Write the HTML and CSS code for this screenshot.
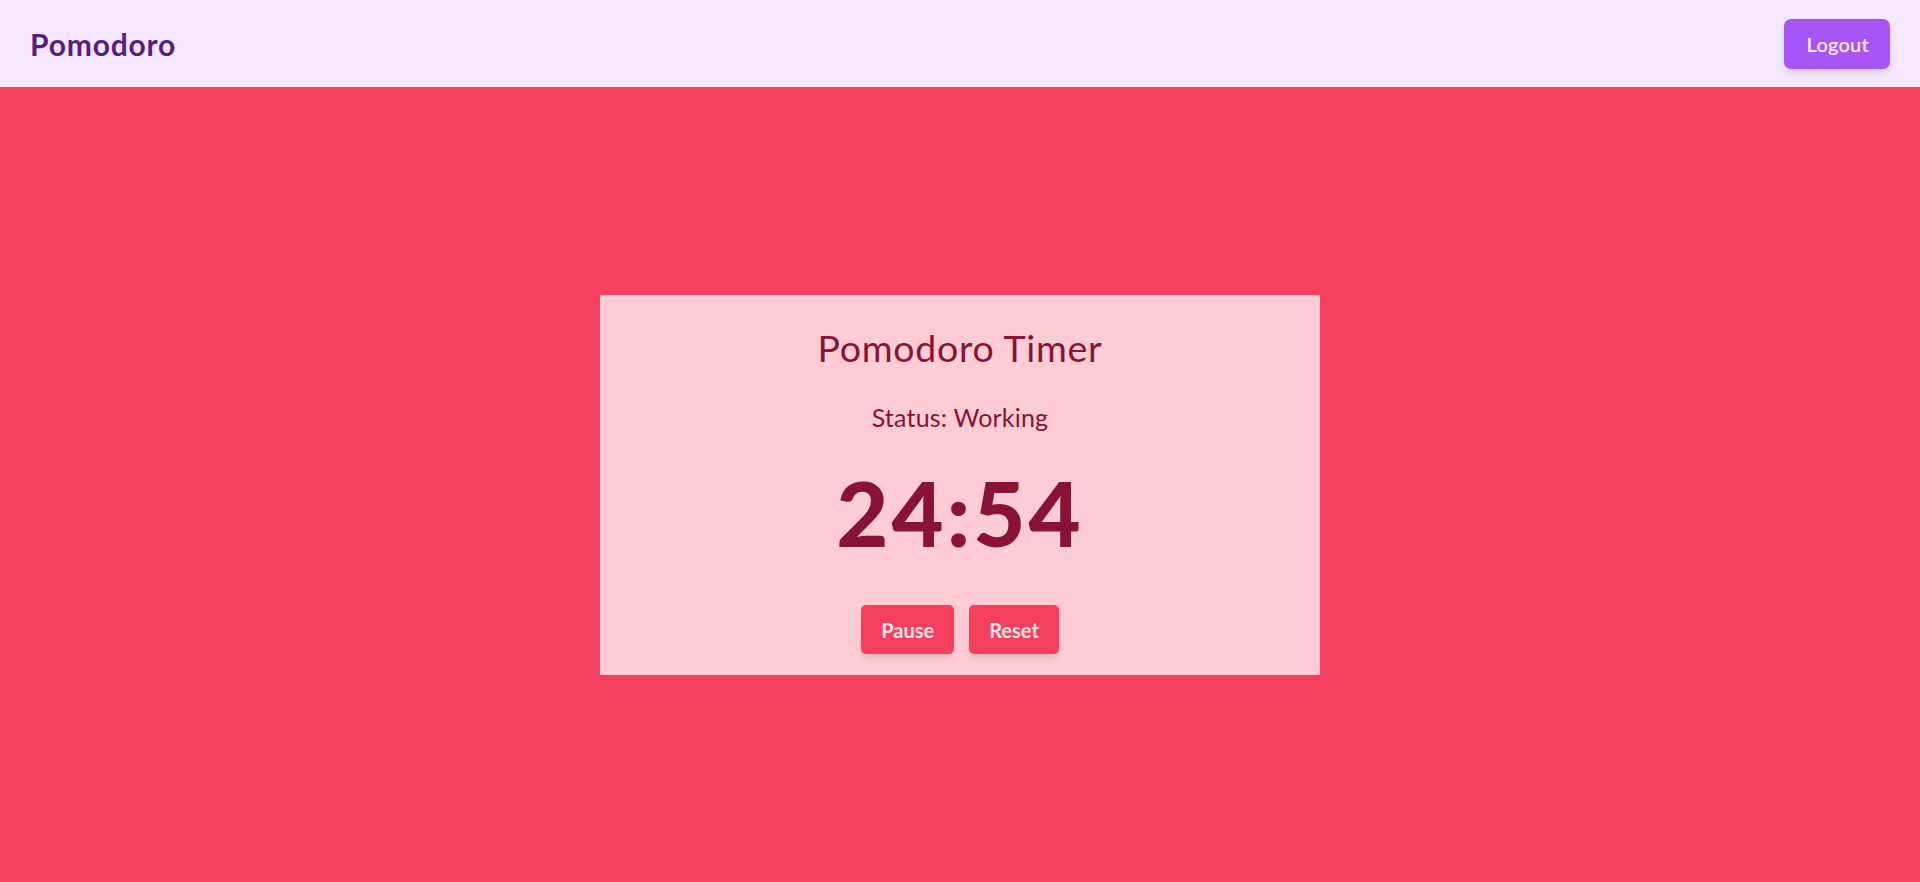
FILE: index.html
```html
<!DOCTYPE html>
<html lang="en">
<head>
<meta charset="utf-8">
<title>Pomodoro</title>
<link rel="stylesheet" href="styles.css">
</head>
<body>
<div class="app">
  <header class="topbar">
    <div class="brand">Pomodoro</div>
    <button class="logout" type="button">Logout</button>
  </header>
  <main class="main">
    <section class="card">
      <h1 class="title">Pomodoro Timer</h1>
      <p class="status">Status: Working</p>
      <div class="timer">24:54</div>
      <div class="actions">
        <button class="btn" type="button">Pause</button>
        <button class="btn" type="button">Reset</button>
      </div>
    </section>
  </main>
</div>
</body>
</html>
```

FILE: styles.css
```css
* { box-sizing: border-box; }
html, body { margin: 0; padding: 0; height: 100%; }
body {
  font-family: Lato, "Open Sans", "Liberation Sans", sans-serif;
  background: #f43f5e;
}
.app {
  display: flex;
  flex-direction: column;
  height: 100vh;
}
.topbar {
  height: 87px;
  flex: 0 0 87px;
  background: #f3e8ff;
  display: flex;
  align-items: center;
  justify-content: space-between;
  padding: 0 30px;
}
.brand {
  font-size: 30px;
  font-weight: 700;
  color: #581c87;
  line-height: 36px;
  letter-spacing: 0.8px;
}
.logout {
  font-family: inherit;
  font-size: 20px;
  line-height: 30px;
  font-weight: 600;
  color: #f3e8ff;
  background: #a855f7;
  border: none;
  border-radius: 7px;
  padding: 10px 21px 10px 22px;
  letter-spacing: 0.2px;
  box-shadow: 0 5px 8px -2px rgba(0,0,0,0.12), 0 2px 5px -2px rgba(0,0,0,0.1);
}
.main {
  flex: 1;
  display: flex;
  align-items: center;
  justify-content: center;
}
.card {
  width: 720px;
  background: #fecdd3;
  color: #881337;
  text-align: center;
  padding: 30px 30px 21px;
}
.title {
  margin: 0 0 30px;
  font-size: 37.5px;
  line-height: 45px;
  font-weight: 400;
  letter-spacing: 0.7px;
}
.status {
  margin: 0 0 32px;
  font-size: 25px;
  line-height: 35px;
  letter-spacing: 0.2px;
}
.timer {
  font-size: 90px;
  line-height: 90px;
  font-weight: 900;
  letter-spacing: 3px;
  margin-bottom: 48px;
}
.actions {
  display: flex;
  justify-content: center;
  gap: 15px;
}
.btn {
  font-family: inherit;
  font-size: 20px;
  line-height: 29px;
  font-weight: 700;
  color: #ffe4e6;
  background: #f43f5e;
  border: none;
  border-radius: 5px;
  padding: 11px 20px 9px;
  box-shadow: 0 5px 8px -2px rgba(0,0,0,0.12), 0 2px 5px -2px rgba(0,0,0,0.1);
}
```
